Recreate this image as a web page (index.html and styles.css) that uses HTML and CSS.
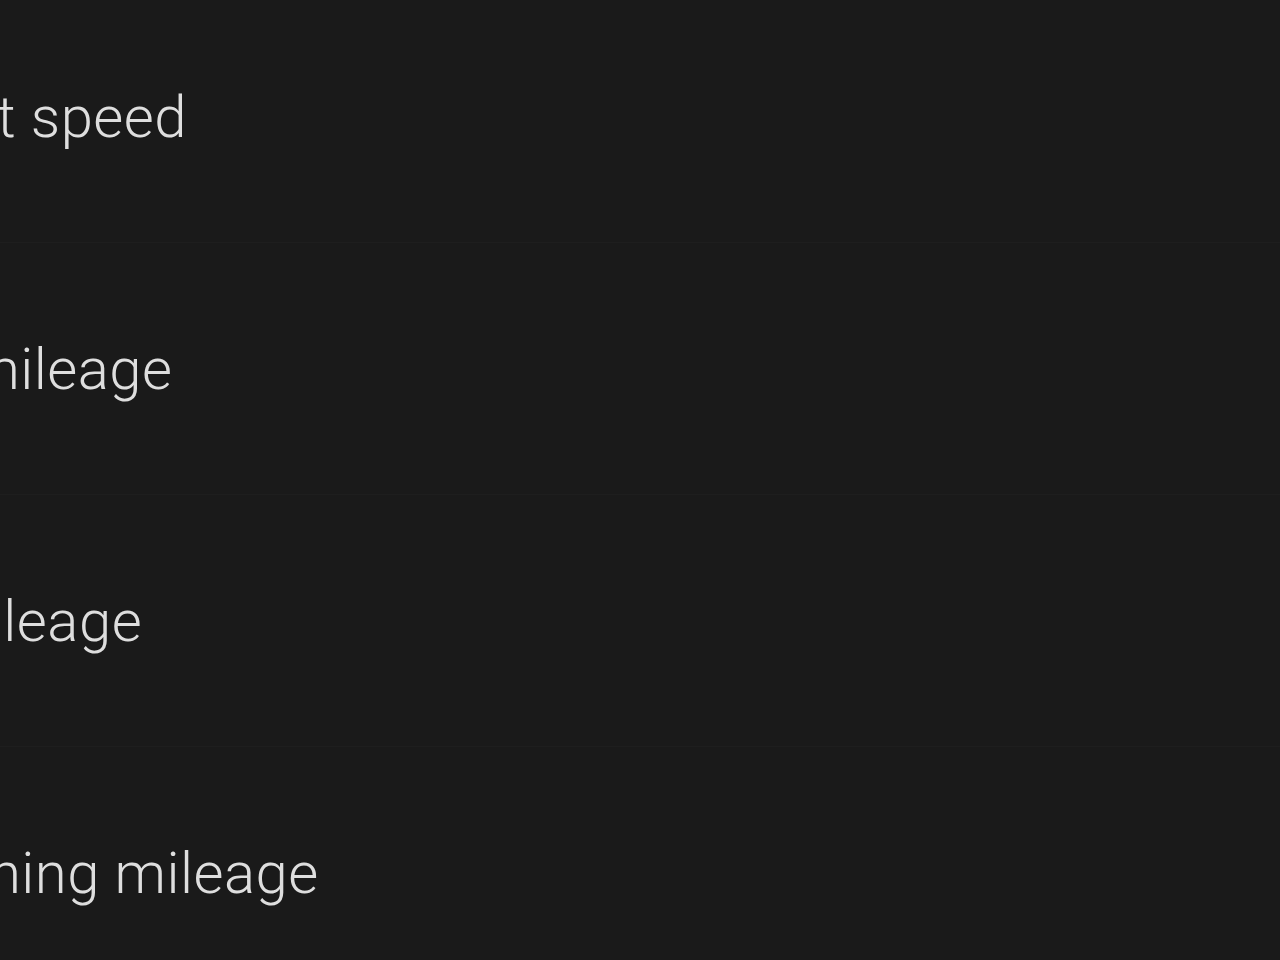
FILE: index.html
```html
<!DOCTYPE html>
<html lang="en">
<head>
  <meta charset="UTF-8">
  <meta name="viewport" content="width=device-width, initial-scale=1.0">
  <title>Vehicle info</title>
  <link rel="stylesheet" href="styles.css">
</head>
<body>
  <div class="info-list">
    <!-- Speed -->
    <div class="info-row"><span class="info-label">Current speed</span></div>
    <!-- Mileage -->
    <div class="info-row"><span class="info-label">Total mileage</span></div>
    <div class="info-row"><span class="info-label">Trip mileage</span></div>
    <div class="info-row"><span class="info-label">Remaining mileage</span></div>
  </div>
</body>
</html>
```

FILE: styles.css
```css
html, body { margin: 0; height: 100%; background-color: #1a1a1a; overflow: hidden; }
body { font-family: Roboto, "Noto Sans", sans-serif; color: #dedede; }
.info-list { margin-top: -9px; margin-left: -176px; }
.info-row {
  height: 252px; display: flex; align-items: center;
  border-bottom: 1px solid #1e1e1e; box-sizing: border-box;
}
.info-label { font-size: 58px; font-weight: 300; letter-spacing: 0.5px; white-space: nowrap; }
```
